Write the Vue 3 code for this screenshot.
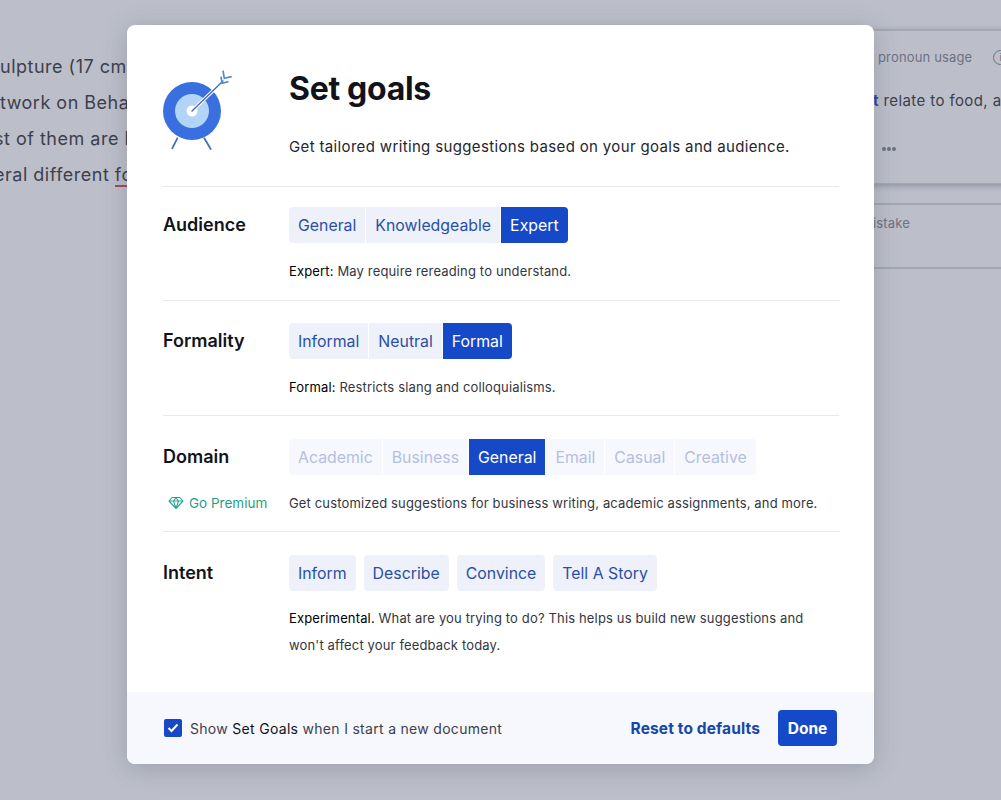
<script setup>
const rows = [
  {
    label: 'Audience',
    options: ['General', 'Knowledgeable', 'Expert'],
    active: 'Expert',
    strong: 'Expert:',
    text: ' May require rereading to understand.',
    cls: 'first',
  },
  {
    label: 'Formality',
    options: ['Informal', 'Neutral', 'Formal'],
    active: 'Formal',
    strong: 'Formal:',
    text: ' Restricts slang and colloquialisms.',
    cls: '',
  },
]
const domains = ['Academic', 'Business', 'General', 'Email', 'Casual', 'Creative']
const intents = ['Inform', 'Describe', 'Convince', 'Tell A Story']
</script>

<template>
  <div class="page">
    <div class="doc">
      <p>ulpture (17 cm</p>
      <p>twork on Beha</p>
      <p class="cut">st of them are l</p>
      <p class="cut">eral different <span class="flagged">fo</span></p>
    </div>

    <aside class="side">
      <div class="card main-card">
        <div class="card-head"><span>pronoun usage</span><span class="info">i</span></div>
        <p class="card-text"><b>t</b> relate to food, a</p>
        <div class="dots"><i></i><i></i><i></i></div>
      </div>
      <div class="card small-card">istake</div>
    </aside>

    <section class="modal">
      <header class="head">
        <svg class="target" width="70" height="82" viewBox="0 0 70 82" fill="none">
          <path d="M14.300 69.300 9.300 79.300M41.300 69.300 47.700 80" stroke="#4a6fb5" stroke-width="1.800" stroke-linecap="round" />
          <circle cx="29" cy="42" r="29" fill="#3a6fdf" />
          <circle cx="29" cy="42" r="17" fill="#b2d4f7" />
          <circle cx="29" cy="42" r="5.500" fill="#fff" />
          <path d="M29 42 57 15" stroke="#fff" stroke-width="3.500" />
          <path d="M29 42 60 12" stroke="#4a6fb5" stroke-width="1.400" stroke-linecap="round" />
          <path d="M58 7.700 59 14.300 65.500 12.700M60 1.700 61.300 9.300 68.700 7.700" stroke="#5d86cf" stroke-width="1.700" />
        </svg>
        <div>
          <h1>Set goals</h1>
          <p>Get tailored writing suggestions based on your goals and audience.</p>
        </div>
      </header>

      <div v-for="row in rows" :key="row.label" class="row" :class="row.cls">
        <h2>{{ row.label }}</h2>
        <div>
          <div class="group">
            <button
              v-for="option in row.options"
              :key="option"
              :class="{ active: option === row.active }"
            >{{ option }}</button>
          </div>
          <p class="hint"><b>{{ row.strong }}</b>{{ row.text }}</p>
        </div>
      </div>

      <div class="row domain">
        <div>
          <h2>Domain</h2>
          <div class="premium">
            <svg width="16" height="14" viewBox="0 0 16 14" fill="none" stroke="#2aa893" stroke-width="1.100" stroke-linejoin="round">
              <path d="M4 1.500h8L15 5 8 12.500 1 5ZM1 5h14M5.500 5 8 12.500 10.500 5 8 1.500 5.500 5Z" />
            </svg>
            <span>Go Premium</span>
          </div>
        </div>
        <div>
          <div class="group locked">
            <button v-for="d in domains" :key="d" :class="{ active: d === 'General' }">{{ d }}</button>
          </div>
          <p class="hint">Get customized suggestions for business writing, academic assignments, and more.</p>
        </div>
      </div>

      <div class="row last">
        <h2>Intent</h2>
        <div>
          <div class="group spaced">
            <button v-for="i in intents" :key="i">{{ i }}</button>
          </div>
          <p class="hint tall"><b>Experimental.</b> What are you trying to do? This helps us build new suggestions and won't affect your feedback today.</p>
        </div>
      </div>

      <footer class="foot">
        <label class="check">
          <span class="box">
            <svg width="12" height="10" viewBox="0 0 12 10" fill="none"><path d="M1.500 5 4.500 8l6-6.500" stroke="#fff" stroke-width="2" /></svg>
          </span>
          <span>Show <b>Set Goals</b> when I start a new document</span>
        </label>
        <div class="actions">
          <a>Reset to defaults</a>
          <button class="done">Done</button>
        </div>
      </footer>
    </section>
  </div>
</template>

<style>
html, body { margin: 0; background: #bcbfca; }
</style>

<style scoped>
.page {
  position: relative;
  width: 1001px;
  height: 800px;
  overflow: hidden;
  background: #bcbfca;
  font-family: Inter, "Liberation Sans", sans-serif;
  color: #11131a;
}
.doc {
  padding-top: 49px;
  color: #3d404c;
  font-size: 18px;
  line-height: 36px;
  letter-spacing: .5px;
  white-space: nowrap;
}
.doc p { margin: 0; }
.doc p.cut { margin-left: -6px; }
.flagged { border-bottom: 2px solid #a8475f; }
.side {
  position: absolute;
  left: 836px;
  top: 29px;
  width: 200px;
  color: #6d7183;
}
.card { border-top: 2px solid #a3a6b3; }
.main-card {
  height: 155px;
  padding-left: 42px;
  box-sizing: border-box;
  box-shadow: 0 2px 6px rgba(60, 64, 80, .35);
  border-bottom: 1px solid #a3a6b3;
}
.card-head {
  display: flex;
  align-items: center;
  gap: 21px;
  margin-top: 17px;
  font-size: 13px;
  line-height: 18px;
  letter-spacing: .15px;
}
.info {
  width: 15px;
  height: 15px;
  border: 1px solid #6d7183;
  border-radius: 50%;
  box-sizing: border-box;
  font-size: 10px;
  line-height: 13px;
  text-align: center;
  flex: none;
}
.card-text {
  margin: 25px 0 0 -5px;
  font-size: 15px;
  line-height: 20px;
  letter-spacing: .4px;
  color: #3d404c;
  white-space: nowrap;
}
.card-text b { color: #284a9c; }
.dots {
  display: flex;
  gap: 1px;
  margin: 36px 0 0 4px;
}
.dots i {
  width: 4px;
  height: 4px;
  border-radius: 50%;
  background: #6d7183;
}
.small-card {
  margin-top: 19px;
  height: 66px;
  padding: 9px 0 0 37px;
  box-sizing: border-box;
  border-bottom: 2px solid #a3a6b3;
  font-size: 13px;
  line-height: 18px;
  letter-spacing: .15px;
}
.modal {
  position: absolute;
  left: 127px;
  top: 25px;
  width: 747px;
  height: 739px;
  display: flex;
  flex-direction: column;
  background: #fff;
  border-radius: 8px;
  overflow: hidden;
  box-shadow: 0 4px 24px rgba(60, 64, 80, .25);
}
.head {
  display: flex;
  flex: none;
  height: 162px;
  margin: 0 35px 0 36px;
  box-sizing: border-box;
  border-bottom: 1px solid #e6e8ee;
}
.target { flex: none; margin: 44px 56px 0 0; }
.head h1 {
  margin: 45px 0 0;
  font-size: 32px;
  line-height: 38px;
  font-weight: 700;
  letter-spacing: -.3px;
}
.head p {
  margin: 28px 0 0;
  font-size: 15px;
  line-height: 22px;
  letter-spacing: .35px;
  color: #23262f;
}
.row {
  display: grid;
  flex: none;
  grid-template-columns: 126px 1fr;
  margin: 0 35px 0 36px;
  padding-top: 22px;
  height: 115px;
  box-sizing: border-box;
  border-bottom: 1px solid #e6e8ee;
}
.row.first { padding-top: 20px; height: 114px; }
.row.domain { padding-top: 23px; height: 116px; }
.row.last { padding-top: 23px; border-bottom: 0; height: 160px; }
h2 {
  margin: 0;
  font-size: 18px;
  line-height: 36px;
  font-weight: 600;
}
.group { display: flex; gap: 1px; height: 36px; }
.group button {
  padding: 0 9px;
  border: 0;
  background: #eef1fa;
  color: #2a4fa5;
  font: 400 15.850px/35px Inter, "Liberation Sans", sans-serif;
}
.group button:first-child { border-radius: 4px 0 0 4px; }
.group button:last-child { border-radius: 0 4px 4px 0; }
.group button.active { background: #1549c7; color: #fff; }
.group.locked button:not(.active) { background: #f6f8fd; color: #b4c0de; }
.group.spaced { gap: 8px; }
.group.spaced button { border-radius: 4px; }
.hint {
  margin: 18px 0 0;
  font-size: 13px;
  line-height: 20px;
  color: #33363f;
  letter-spacing: .15px;
}
.hint b { font-weight: 400; color: #000; }
.hint.tall { line-height: 27px; margin-top: 14px; width: 530px; }
.premium {
  display: flex;
  align-items: center;
  gap: 5px;
  margin: 18px 0 0 5px;
  font-size: 13.500px;
  line-height: 20px;
  color: #1f9e88;
}
.foot {
  display: flex;
  align-items: center;
  justify-content: space-between;
  flex: 1;
  padding: 0 37px;
  background: #f6f8fd;
}
.check {
  display: flex;
  align-items: center;
  gap: 8px;
  font-size: 14px;
  color: #3d404c;
  letter-spacing: .3px;
}
.check b { font-weight: 400; color: #11131a; }
.box {
  display: flex;
  align-items: center;
  justify-content: center;
  width: 18px;
  height: 18px;
  border-radius: 2px;
  background: #1549c7;
}
.actions { display: flex; align-items: center; gap: 18px; }
.actions a { color: #1549a8; font-size: 15.500px; font-weight: 700; letter-spacing: .12px; }
.done {
  width: 59px;
  height: 36px;
  border: 0;
  border-radius: 4px;
  background: #1549c7;
  color: #fff;
  font: 700 15.500px Inter, "Liberation Sans", sans-serif;
}
</style>
